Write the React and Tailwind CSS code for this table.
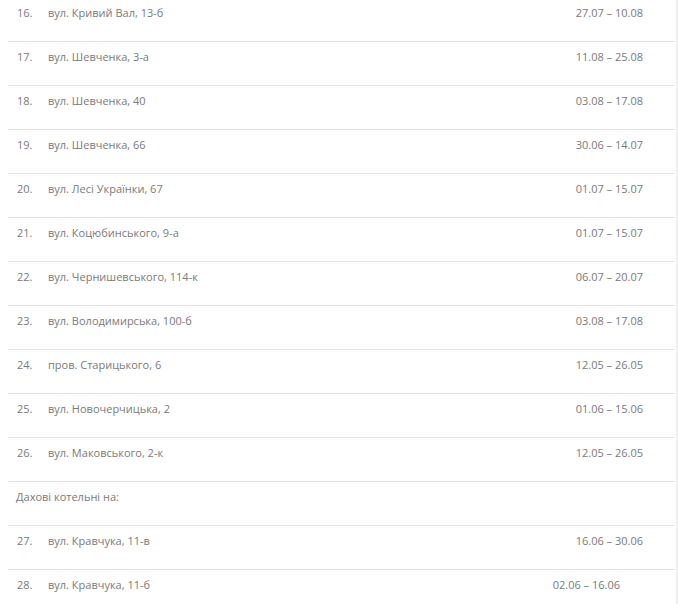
import React from 'react';

const rows = [
  { n: '16.', addr: 'вул. Кривий Вал, 13-б', date: '27.07 – 10.08' },
  { n: '17.', addr: 'вул. Шевченка, 3-а', date: '11.08 – 25.08' },
  { n: '18.', addr: 'вул. Шевченка, 40', date: '03.08 – 17.08' },
  { n: '19.', addr: 'вул. Шевченка, 66', date: '30.06 – 14.07' },
  { n: '20.', addr: 'вул. Лесі Українки, 67', date: '01.07 – 15.07' },
  { n: '21.', addr: 'вул. Коцюбинського, 9-а', date: '01.07 – 15.07' },
  { n: '22.', addr: 'вул. Чернишевського, 114-к', date: '06.07 – 20.07' },
  { n: '23.', addr: 'вул. Володимирська, 100-б', date: '03.08 – 17.08' },
  { n: '24.', addr: 'пров. Старицького, 6', date: '12.05 – 26.05' },
  { n: '25.', addr: 'вул. Новочерчицька, 2', date: '01.06 – 15.06' },
  { n: '26.', addr: 'вул. Маковського, 2-к', date: '12.05 – 26.05' },
  { heading: 'Дахові котельні на:' },
  { n: '27.', addr: 'вул. Кравчука, 11-в', date: '16.06 – 30.06' },
  { n: '28.', addr: 'вул. Кравчука, 11-б', date: '02.06 – 16.06', shifted: true },
];

export default function App() {
  return (
    <div className="w-[678px] h-[604px] overflow-hidden bg-white flex font-['Open_Sans',sans-serif] text-[11px] text-[#7a7a7a]">
      <div className="flex-1 pl-[8px] mt-[-2px]">
        {rows.map((r, i) => (
          <div key={i} className="h-[44px] border-b border-[#e4e4e4] flex items-start pt-[6px] leading-[18px]">
            {r.heading ? (
              <span className="pl-[8px]">{r.heading}</span>
            ) : (
              <>
                <span className="w-[31px] pl-[9px] box-content">{r.n}</span>
                <span className="flex-1">{r.addr}</span>
                <span className={r.shifted ? 'pr-[55px]' : 'pr-[32px]'}>{r.date}</span>
              </>
            )}
          </div>
        ))}
      </div>
      <div className="w-[2px] bg-[#f0f0f0] ml-[1px]" />
    </div>
  );
}
